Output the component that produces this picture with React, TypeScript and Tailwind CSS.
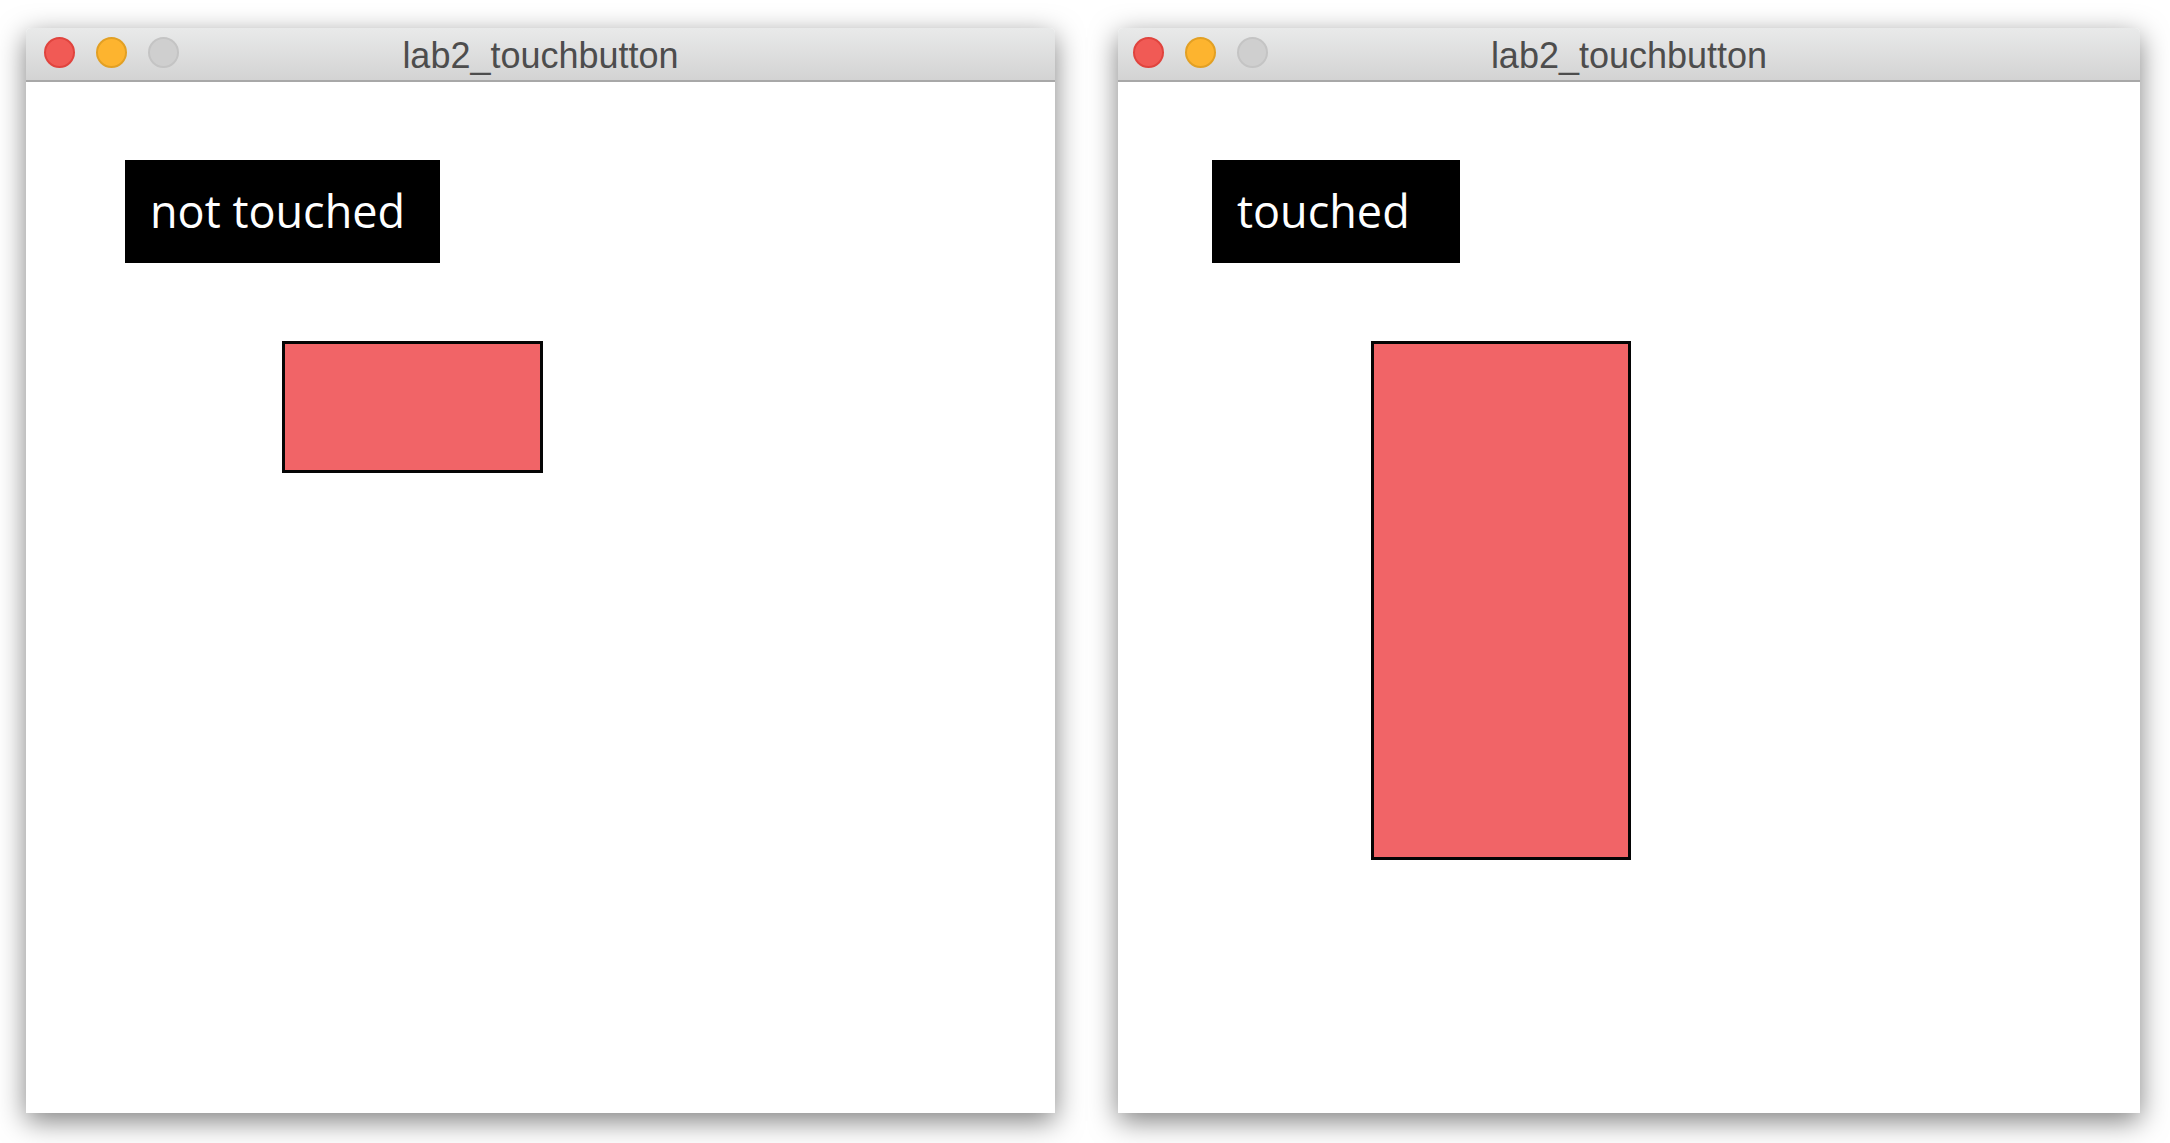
import React from 'react';

type SketchWindow = {
  title: string;
  label: string;
  width: string;
  padLeft: string;
  labelWidth: string;
  rectOffset: string;
  rectHeight: string;
  rectWidth: string;
  lightsLeft: string;
};

const TrafficLights: React.FC<{ className: string }> = ({ className }) => (
  <div className={`flex items-center gap-[21px] ${className}`}>
    <span className="block h-[31px] w-[31px] rounded-full border-2 border-[#e0443e] bg-[#f15a55]" />
    <span className="block h-[31px] w-[31px] rounded-full border-2 border-[#e2a024] bg-[#fdb42f]" />
    <span className="block h-[31px] w-[31px] rounded-full border-2 border-[#c4c4c4] bg-[#cfcfcf]" />
  </div>
);

const Window: React.FC<{ w: SketchWindow }> = ({ w }) => (
  <div
    className={`flex h-[1085px] flex-col overflow-hidden rounded-t-[5px] bg-white shadow-[0_8px_28px_rgba(0,0,0,0.5)] ${w.width}`}
  >
    {/* Title bar */}
    <div className="relative flex h-[54px] shrink-0 items-center justify-center border-b-2 border-[#a8a8a8] bg-gradient-to-b from-[#e9eaea] to-[#d3d3d3]">
      <TrafficLights className={`absolute top-[9px] ${w.lightsLeft}`} />
      <span className="pt-[4px] font-['Liberation_Sans',Arial,sans-serif] text-[36px] leading-none text-[#4d4d4d]">
        {w.title}
      </span>
    </div>

    {/* Sketch canvas */}
    <div className={`flex flex-1 flex-col items-start pt-[78px] ${w.padLeft}`}>
      <div
        className={`h-[103px] bg-black pl-[25px] pt-[28px] font-['Open_Sans',sans-serif] text-[45px] leading-none text-white ${w.labelWidth}`}
      >
        {w.label}
      </div>
      <div
        className={`mt-[78px] border-[3px] border-[#050505] bg-[#f16467] ${w.rectOffset} ${w.rectWidth} ${w.rectHeight}`}
      />
    </div>
  </div>
);

const windows: SketchWindow[] = [
  {
    title: 'lab2_touchbutton',
    label: 'not touched',
    width: 'w-[1029px]',
    padLeft: 'pl-[99px]',
    labelWidth: 'w-[315px]',
    rectOffset: 'ml-[157px]',
    rectWidth: 'w-[261px]',
    rectHeight: 'h-[132px]',
    lightsLeft: 'left-[18px]',
  },
  {
    title: 'lab2_touchbutton',
    label: 'touched',
    width: 'w-[1022px]',
    padLeft: 'pl-[94px]',
    labelWidth: 'w-[248px]',
    rectOffset: 'ml-[159px]',
    rectWidth: 'w-[260px]',
    rectHeight: 'h-[519px]',
    lightsLeft: 'left-[15px]',
  },
];

const App: React.FC = () => {
  return (
    <div className="flex h-[1143px] w-[2170px] items-start gap-[63px] overflow-hidden bg-white pl-[26px] pt-[28px]">
      {windows.map((w) => (
        <Window key={w.label} w={w} />
      ))}
    </div>
  );
};

export default App;
